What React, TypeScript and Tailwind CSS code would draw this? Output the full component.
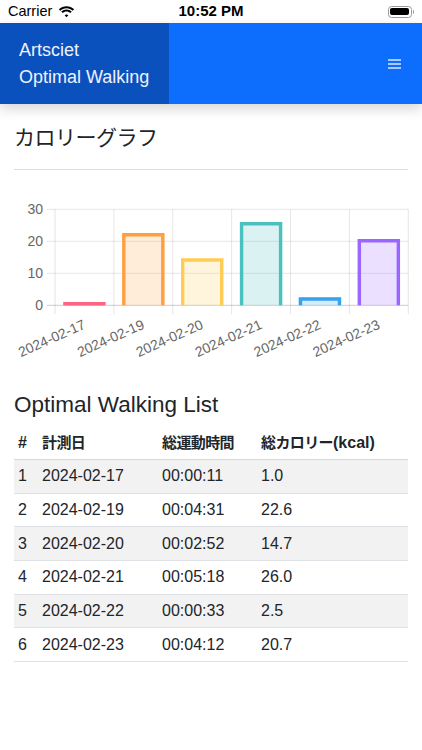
import React from 'react'

const bars = [
  { label: '2024-02-17', value: 1.0, stroke: 'rgb(255,99,132)', fill: 'rgba(255,99,132,0.2)' },
  { label: '2024-02-19', value: 22.6, stroke: 'rgb(255,159,64)', fill: 'rgba(255,159,64,0.2)' },
  { label: '2024-02-20', value: 14.7, stroke: 'rgb(255,205,86)', fill: 'rgba(255,205,86,0.2)' },
  { label: '2024-02-21', value: 26.0, stroke: 'rgb(75,192,192)', fill: 'rgba(75,192,192,0.2)' },
  { label: '2024-02-22', value: 2.5, stroke: 'rgb(54,162,235)', fill: 'rgba(54,162,235,0.2)' },
  { label: '2024-02-23', value: 20.7, stroke: 'rgb(153,102,255)', fill: 'rgba(153,102,255,0.2)' },
]

const rows = [
  ['1', '2024-02-17', '00:00:11', '1.0'],
  ['2', '2024-02-19', '00:04:31', '22.6'],
  ['3', '2024-02-20', '00:02:52', '14.7'],
  ['4', '2024-02-21', '00:05:18', '26.0'],
  ['5', '2024-02-22', '00:00:33', '2.5'],
  ['6', '2024-02-23', '00:04:12', '20.7'],
]

const sans = { fontFamily: '"Liberation Sans", "Noto Sans CJK JP", sans-serif' }
const cjk = { fontFamily: '"Noto Sans CJK JP", "Liberation Sans", sans-serif' }

function StatusBar() {
  return (
    <div className="relative flex h-[23px] items-center bg-white px-[8px] text-black" style={sans}>
      <span className="text-[14.5px]">Carrier</span>
      <svg className="ml-[6px]" width="17" height="12" viewBox="0 0 17 12">
        <path d="M8.5 2.2c2.4 0 4.6.9 6.3 2.5l1.3-1.4C14 1.3 11.4.2 8.5.2S3 1.3.9 3.3l1.3 1.4C3.9 3.1 6.1 2.2 8.5 2.2z" fill="#000" />
        <path d="M8.5 5.4c1.5 0 2.9.6 3.9 1.5l1.3-1.4C12.3 4.2 10.5 3.4 8.5 3.4s-3.8.8-5.2 2.1l1.3 1.4c1-.9 2.4-1.5 3.9-1.5z" fill="#000" />
        <path d="M8.5 8.5c.7 0 1.3.3 1.8.7L8.5 11.2 6.7 9.2c.5-.4 1.1-.7 1.8-.7z" fill="#000" />
      </svg>
      <span className="absolute left-1/2 -translate-x-1/2 text-[15px] font-semibold">10:52 PM</span>
      <div className="ml-auto flex items-center">
        <div className="flex h-[12px] w-[24px] items-center rounded-[3.5px] border border-[#9a9a9a] p-[1.5px]">
          <div className="h-full w-full rounded-[2px] bg-black" />
        </div>
        <div className="ml-[1px] h-[4px] w-[1.5px] rounded-r-sm bg-[#9a9a9a]" />
      </div>
    </div>
  )
}

function NavBar() {
  return (
    <div className="relative z-10 flex h-[81px] bg-[#0d6efd] shadow-[0_5px_12px_rgba(0,0,0,0.16)]">
      <div className="flex w-[169px] flex-col justify-center bg-[#0b51bd] pl-[19px] text-[18px] leading-[27px] text-[#eef3fc]" style={sans}>
        <span>Artsciet</span>
        <span>Optimal Walking</span>
      </div>
      <div className="ml-auto flex items-center pr-[21px]">
        <svg width="13" height="10" viewBox="0 0 13 10">
          <path d="M0 1h13M0 5h13M0 9h13" stroke="rgba(255,255,255,0.85)" strokeWidth="1.4" />
        </svg>
      </div>
    </div>
  )
}

function CalorieChart() {
  const left = 55
  const cat = 58.88
  const zero = 114.3
  const unit = 3.2
  const barW = 42.4
  const grid = 'rgba(0,0,0,0.1)'
  return (
    <svg className="-mx-[14px] block" width="422" height="175" viewBox="0 0 422 175" style={sans}>
      {[30, 20, 10, 0].map((v) => {
        const y = zero - v * unit
        return (
          <g key={v}>
            <line x1="47" x2="408.3" y1={y} y2={y} stroke={v === 0 ? 'rgba(0,0,0,0.2)' : grid} strokeWidth="1" />
            <text x="43" y={y + 5} textAnchor="end" fontSize="14" fill="#666">
              {v}
            </text>
          </g>
        )
      })}
      {Array.from({ length: 7 }).map((_, i) => (
        <line key={i} x1={left + i * cat} x2={left + i * cat} y1="18.3" y2="123" stroke={grid} strokeWidth="1" />
      ))}
      {bars.map((b, i) => {
        const cx = left + (i + 0.5) * cat
        const x = cx - barW / 2
        const h = b.value * unit
        const top = zero - h
        return (
          <g key={b.label}>
            <rect x={x} y={top} width={barW} height={h} fill={b.fill} />
            <path
              d={`M${x + 1.7} ${zero} L${x + 1.7} ${top + 1.7} L${x + barW - 1.7} ${top + 1.7} L${x + barW - 1.7} ${zero}`}
              fill="none"
              stroke={b.stroke}
              strokeWidth="3.4"
            />
            <text
              x={cx + 2}
              y={137}
              textAnchor="end"
              fontSize="14"
              fill="#666"
              transform={`rotate(-24 ${cx + 2} 137)`}
            >
              {b.label}
            </text>
          </g>
        )
      })}
    </svg>
  )
}

function WalkingTable() {
  return (
    <div className="mt-[8px] text-[16px] text-[#212529]" style={sans}>
      <div className="grid h-[34px] grid-cols-[24px_120px_99px_1fr] items-center border-b border-[#d6d9dc] font-bold">
        <span className="pl-[4px]">#</span>
        <span className="pl-[4px] text-[15px] tracking-[-0.6px]" style={cjk}>計測日</span>
        <span className="pl-[4px] text-[15px] tracking-[-0.6px]" style={cjk}>総運動時間</span>
        <span className="pl-[4px]">
          <span className="text-[15px] tracking-[-0.6px]" style={cjk}>総カロリー</span>(kcal)
        </span>
      </div>
      {rows.map((r, i) => (
        <div
          key={r[0]}
          className={`grid h-[33.7px] grid-cols-[24px_120px_99px_1fr] items-center border-b border-[#dee2e6] ${i % 2 === 0 ? 'bg-[#f2f2f2]' : 'bg-white'}`}
        >
          {r.map((c, j) => (
            <span key={j} className="pl-[4px]">
              {c}
            </span>
          ))}
        </div>
      ))}
    </div>
  )
}

export default function App() {
  return (
    <div className="min-h-[750px] w-[422px] bg-white">
      <StatusBar />
      <NavBar />
      <div className="px-[14px]">
        <h4 className="mt-[20px] text-[21px] leading-[25px] tracking-[-0.5px] text-[#212529]" style={cjk}>
          カロリーグラフ
        </h4>
        <hr className="mt-[20px] border-t border-[#dcdcdc]" />
        <div className="mt-[21px]">
          <CalorieChart />
        </div>
        <h4 className="mt-[25px] text-[22.5px] leading-[27px] text-[#212529]" style={sans}>
          Optimal Walking List
        </h4>
        <WalkingTable />
      </div>
    </div>
  )
}
